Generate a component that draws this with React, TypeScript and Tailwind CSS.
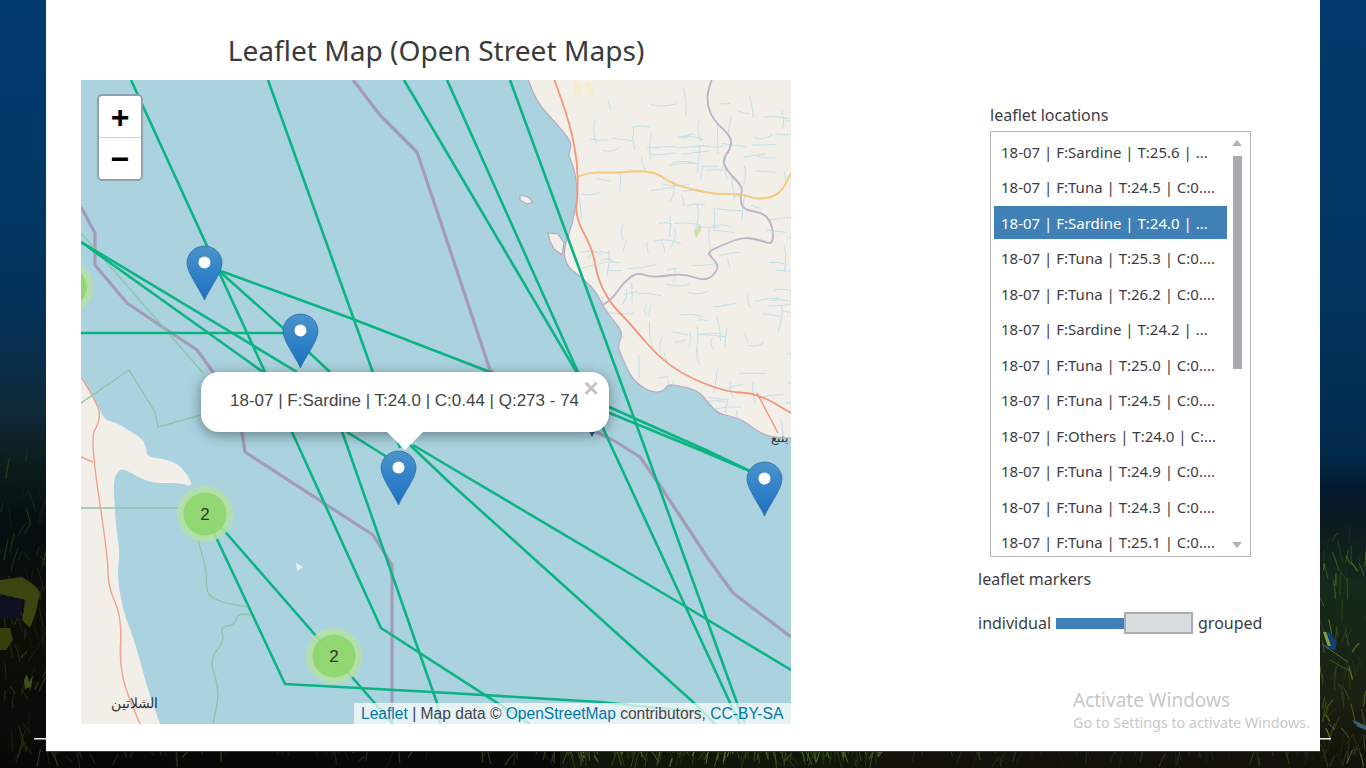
import React from "react";

const rnd = (seed: number) => {
  let s = seed;
  return () => {
    s = (s * 16807) % 2147483647;
    return (s - 1) / 2147483646;
  };
};

const GREEN = "#0db483";

const seaLines = [
  "131,80 218,270 350,318 490,372 609,407 706,450 752,472",
  "218,270 265,372 292,432 381,628 530,724",
  "218,270 283,328 330,372",
  "81,242 297,372",
  "81,242 263,372",
  "81,333 284,333",
  "268,80 400,448",
  "330,397 437,703 440,724",
  "404,80 590,395",
  "447,80 607,437 732,707 740,724",
  "510,80 642,440 737,703 745,724",
  "590,405 700,450 752,472",
  "347,432 387,457",
  "410,445 450,483 693,702 715,724",
  "413,445 450,467 688,608 791,670",
  "200,503 285,684 450,693 600,702 700,712",
  "200,503 317,637 393,724",
];

const smooth = (pts: string) => {
  const p = pts.split(" ").map((s) => s.split(",").map(Number));
  let d = `M${p[0][0]} ${p[0][1]}`;
  for (let i = 1; i < p.length - 1; i++) {
    const mx = (p[i][0] + p[i + 1][0]) / 2;
    const my = (p[i][1] + p[i + 1][1]) / 2;
    d += `Q${p[i][0]} ${p[i][1]} ${mx} ${my}`;
  }
  const l = p[p.length - 1];
  return d + `L${l[0]} ${l[1]}`;
};

const coastLine =
  "528,79 535,100 553,120 566,135 572,145 568,155 574,167 578,193 573,223 563,250 567,267 583,278 597,293 603,307 615,322 623,333 618,345 620,353 630,375 637,383 650,392 663,392 668,384 680,386 697,390 708,402 717,413 730,416 743,420 755,430 770,437 791,438";
const leftCoast =
  "81,377 100,410 105,420 117,423 128,430 140,437 146,445 147,457 160,458 177,463 188,475 193,487 180,483 167,483 153,483 140,478 130,472 120,468 113,480 115,510 116,527 120,553 117,577 123,610 133,637 140,660 147,687 160,724";
const landPath = smooth(coastLine) + "L791 79Z";
const leftLandPath = smooth(leftCoast) + "L81 724Z";

const wadis = (() => {
  const r = rnd(4242);
  const out: string[] = [];
  for (let i = 0; i < 170; i++) {
    const x = 578 + r() * 213;
    const y = 85 + r() * 335;
    const a = (r() - 0.5) * 8;
    const b = 5 + r() * 9;
    const c = (r() - 0.5) * 8;
    const vert = r() > 0.55;
    out.push(
      vert
        ? `M${x} ${y}q${a} ${b} ${c} ${b * 2}`
        : `M${x} ${y}q${b} ${a} ${b * 2} ${c}`
    );
  }
  return out;
})();

const blades = (() => {
  const r = rnd(99);
  const out: { d: string; c: string; w: number }[] = [];
  const dim = ["#1e2a10", "#19230e", "#26331a", "#141c0b", "#2e3a16"];
  const mid = ["#2c3d14", "#35491a", "#24330f", "#3e5420", "#5a7428"];
  const regions = [
    [0, 46, 460, 768, 90, 0],
    [1320, 1366, 540, 768, 80, 1],
    [0, 560, 751, 768, 60, 0],
    [560, 880, 751, 768, 170, 1],
    [880, 1366, 751, 768, 80, 0],
  ];
  regions.forEach(([a, b, c, d, n, bright]) => {
    for (let i = 0; i < n; i++) {
      const x = a + r() * (b - a);
      const y = c + r() * (d - c);
      const dx = (r() - 0.5) * 16;
      const dy = -6 - r() * 18;
      const pal = bright ? mid : dim;
      out.push({
        d: `M${x} ${y}q${dx / 3} ${dy / 2} ${dx} ${dy}`,
        c: pal[Math.floor(r() * pal.length)],
        w: 0.6 + r() * 0.9,
      });
    }
  });
  return out;
})();

function Pin({ x, y }: { x: number; y: number }) {
  return (
    <g transform={`translate(${x} ${y})`}>
      <path
        d="M0 54 C-4 44 -17.5 27 -17.5 17 C-17.5 7 -9 0 0 0 C9 0 17.5 7 17.5 17 C17.5 27 4 44 0 54Z"
        fill="url(#pinFill)"
        stroke="#2d6ea5"
        strokeWidth="0.8"
      />
      <circle cx="0" cy="16.5" r="6" fill="#ffffff" />
    </g>
  );
}

function Cluster({ x, y }: { x: number; y: number }) {
  return (
    <g>
      <circle cx={x} cy={y} r="28" fill="#b5e0a4" fillOpacity="0.85" />
      <circle cx={x} cy={y} r="21.5" fill="#8cd568" fillOpacity="0.86" />
    </g>
  );
}

function MapArt() {
  return (
    <svg viewBox="81 80 710 644" className="block w-[710px] h-[644px]">
      <defs>
        <linearGradient id="pinFill" x1="0" y1="0" x2="0" y2="1">
          <stop offset="0" stopColor="#4b93cb" />
          <stop offset="0.55" stopColor="#2f80c8" />
          <stop offset="1" stopColor="#1f6fbd" />
        </linearGradient>
        <clipPath id="landClip">
          <path d={landPath} />
        </clipPath>
      </defs>
      <rect x="81" y="80" width="710" height="644" fill="#aad3df" />
      <path d={landPath} fill="#f2efe9" />
      <path d={smooth(coastLine)} fill="none" stroke="#b7abc2" strokeWidth="1.2" />
      <path d={leftLandPath} fill="#f2efe9" />
      <path d="M520 195l8 2 5 5-6 2-7-4z M548 233l10 1 6 9-2 12-8-6-4-8z" fill="#f2efe9" stroke="#b7abc2" strokeWidth="1.2" />
      <path d="M296 563l7 4-6 4z" fill="#f2efe9" />
      <g clipPath="url(#landClip)" fill="none" stroke="#c2dfe8" strokeWidth="1">
        {wadis.map((d, i) => (
          <path key={i} d={d} />
        ))}
      </g>
      <path d="M694 232l6-8 1 6-5 8z" fill="#cfe0a6" />
      <path d="M573 82l7 0 2 14-7 0z M584 82l7 0 4 14-6 0z" fill="#f5edd2" />
      {/* land boundary */}
      <path
        d={smooth(
          "712,79 708,90 707,103 713,120 732,137 730,150 722,160 728,172 743,187 740,198 743,210 765,213 773,227 773,245 760,240 743,237 725,244 707,252 712,258 720,267 707,282 683,273 653,278 637,272 623,283 613,298 603,305"
        )}
        fill="none"
        stroke="#bdb2c9"
        strokeWidth="1.8"
      />
      {/* roads */}
      <g fill="none" strokeLinejoin="round">
        <path
          d={smooth("577,177 590,172 613,173 653,170 673,185 717,195 740,193 757,200 780,195 791,173")}
          stroke="#f7c97f"
          strokeWidth="1.8"
        />
        <path
          d={smooth("554,79 567,113 577,157 578,193 575,217 593,250 597,277 610,303 627,320 667,367 723,392 757,393 791,413")}
          stroke="#f4967a"
          strokeWidth="1.8"
        />
        <polyline points="757,393 778,433" stroke="#f4967a" strokeWidth="1.4" />
        <path
          d={smooth("81,377 100,407 99,423 90,438 108,557 108,587 122,617 119,673 140,724")}
          stroke="#f4a08a"
          strokeWidth="1.4"
        />
        <polyline points="81,457 93,462" stroke="#f4a08a" strokeWidth="1.4" />
      </g>
      {/* sea boundary */}
      <g fill="none" stroke="#a59ab8" strokeWidth="3.2" strokeLinejoin="round">
        <polyline points="353,80 380,115 417,152 440,220 490,370 530,400 613,440 640,457 663,490 707,557 733,593 791,637" />
        <polyline points="81,207 95,233 95,265 127,303 167,330 197,350 213,372 240,420 245,452 373,535 392,565 392,724" />
      </g>
      {/* green thin boundaries */}
      <g fill="none" stroke="#8cc5a8" strokeWidth="1.3">
        <polyline points="81,403 129,370 155,412 158,427 205,414" />
        <polyline points="81,233 150,312 203,373" />
        <polyline points="81,508 182,508" />
        <path d={smooth("198,540 207,570 206,590 212,598 225,603 247,607")} />
        <path d={smooth("250,615 238,612 235,625 220,627 225,640 209,660 220,690 213,724")} />
      </g>
      {/* routes */}
      <g fill="none" stroke={GREEN} strokeWidth="2.6" strokeLinejoin="round">
        {seaLines.map((p, i) => (
          <polyline key={i} points={p} />
        ))}
      </g>
      <Cluster x={65} y={287} />
      <Cluster x={205} y={514} />
      <Cluster x={334} y={656} />
      <Pin x={204.5} y={246} />
      <Pin x={300.5} y={314} />
      <Pin x={398.5} y={451} />
      <Pin x={764.5} y={462} />
      <path d="M587 428h10l-5 9z" fill="#245f9f" />
    </svg>
  );
}

const rows = [
  ["18-07 | F:Sardine | T:25.6 | ...", false],
  ["18-07 | F:Tuna | T:24.5 | C:0....", false],
  ["18-07 | F:Sardine | T:24.0 | ...", true],
  ["18-07 | F:Tuna | T:25.3 | C:0....", false],
  ["18-07 | F:Tuna | T:26.2 | C:0....", false],
  ["18-07 | F:Sardine | T:24.2 | ...", false],
  ["18-07 | F:Tuna | T:25.0 | C:0....", false],
  ["18-07 | F:Tuna | T:24.5 | C:0....", false],
  ["18-07 | F:Others | T:24.0 | C:...", false],
  ["18-07 | F:Tuna | T:24.9 | C:0....", false],
  ["18-07 | F:Tuna | T:24.3 | C:0....", false],
  ["18-07 | F:Tuna | T:25.1 | C:0....", false],
] as const;

const UI = "font-['Noto_Sans','Open_Sans',sans-serif]";
const HV = "font-['Liberation_Sans',Arial,sans-serif]";

export default function App() {
  return (
    <div className="relative w-[1366px] h-[768px] overflow-hidden bg-black">
      <svg className="absolute inset-0 w-[1366px] h-[768px]" viewBox="0 0 1366 768">
        <defs>
          <linearGradient id="bgL" x1="0" y1="0" x2="0" y2="1">
            <stop offset="0" stopColor="#013a6c" />
            <stop offset="0.2" stopColor="#013a69" />
            <stop offset="0.4" stopColor="#03325a" />
            <stop offset="0.53" stopColor="#0f2a3a" />
            <stop offset="0.61" stopColor="#0b1b1a" />
            <stop offset="0.68" stopColor="#050e12" />
            <stop offset="0.8" stopColor="#0c0f08" />
            <stop offset="1" stopColor="#0a0906" />
          </linearGradient>
          <linearGradient id="bgR" x1="0" y1="0" x2="0" y2="1">
            <stop offset="0" stopColor="#013a6c" />
            <stop offset="0.4" stopColor="#02345e" />
            <stop offset="0.59" stopColor="#01294a" />
            <stop offset="0.64" stopColor="#04192c" />
            <stop offset="0.69" stopColor="#0d1c1e" />
            <stop offset="0.76" stopColor="#142a1a" />
            <stop offset="0.91" stopColor="#1a2012" />
            <stop offset="1" stopColor="#120f08" />
          </linearGradient>
        </defs>
        <rect x="0" y="0" width="46" height="768" fill="url(#bgL)" />
        <rect x="1320" y="0" width="46" height="768" fill="url(#bgR)" />
        <rect x="0" y="751" width="1366" height="17" fill="#070806" />
        <rect x="560" y="751" width="320" height="17" fill="#10170a" />
        <rect x="880" y="751" width="486" height="17" fill="#12120a" />
        {blades.map((b, i) => (
          <path key={i} d={b.d} stroke={b.c} strokeWidth={b.w} fill="none" />
        ))}
        <path d="M0 580 L22 577 L34 585 L40 592 L36 612 L30 628 L22 620 L26 600 L0 594Z" fill="#3a450f" />
        <path d="M0 628 L10 628 L13 640 L6 650 L0 650Z" fill="#323f0b" />
        <path d="M0 596 L24 600 L20 618 L0 618Z" fill="#0e1122" />
        <path d="M24 680 l3 -6 2 8 4 -7 -2 12 -6 2z" fill="#3f4f1c" />
        <path d="M1323 632 l6 0 8 10 -2 8 -8 -2z" fill="#123f78" />
        <path d="M1323 632 l3 0 5 14 -3 0z" fill="#8aa52a" />
        <path d="M1352 720 l6 2 8 4 0 4 -8 -3z" fill="#3d5e74" />
        <path d="M1322 644 q14 10 26 18" stroke="#5f6a45" strokeWidth="1" fill="none" />
        <path d="M1330 660 q10 6 22 12" stroke="#3e4a1c" strokeWidth="1.2" fill="none" />
        <rect x="34" y="738" width="12" height="1.5" fill="#f2f2f2" />
        <rect x="1320" y="738" width="11" height="1.5" fill="#f2f2f2" />
      </svg>

      <div className="relative ml-[46px] w-[1274px] h-[751px] bg-white flex text-[#404048] border-b border-[#3a3a3a] box-content -mb-px">
        {/* left column */}
        <div className="w-[745px] pl-[35px] shrink-0">
          <h1 className={`${UI} h-[80px] w-[710px] pt-[31px] text-center text-[28.1px] leading-[38px] font-normal text-[#3a3a3a] whitespace-nowrap`}>
            Leaflet Map (Open Street Maps)
          </h1>
          <div className="relative w-[710px] h-[644px] overflow-hidden">
            <MapArt />

            {/* zoom control */}
            <div className="absolute left-[16px] top-[14px] w-[46px] h-[87px] rounded-[5px] border-[2.5px] border-[#8ba3ad] bg-white flex flex-col text-black">
              <div className={`${HV} flex-1 flex items-center justify-center text-[32px] leading-none font-bold border-b border-[#cfcfcf]`}>+</div>
              <div className={`${HV} flex-1 flex items-center justify-center text-[32px] leading-none font-bold`}>−</div>
            </div>

            {/* cluster labels */}
            <span className={`${HV} absolute left-[118px] top-[425px] w-[12px] text-center text-[17px] leading-5 text-[#333]`}>2</span>
            <span className={`${HV} absolute left-[247px] top-[567px] w-[12px] text-center text-[17px] leading-5 text-[#333]`}>2</span>

            {/* place labels */}
            <span className={`${HV} absolute left-[30px] top-[615px] text-[14px] leading-4 text-[#333]`} dir="rtl">الشلاتين</span>
            <span className={`${HV} absolute left-[690px] top-[350px] text-[12px] leading-4 text-[#333]`} dir="rtl">ينبع</span>

            {/* popup */}
            <div className="absolute left-[120px] top-[292px] w-[408px] h-[60px] rounded-[18px] bg-white shadow-[0_3px_14px_rgba(0,0,0,0.4)]">
              <div className={`${HV} pl-[29px] pt-[19px] text-[17px] leading-5 whitespace-nowrap text-[#444]`}>
                18-07 | F:Sardine | T:24.0 | C:0.44 | Q:273 - 74
              </div>
              <span className={`${HV} absolute left-[380px] top-[3px] w-[20px] text-center text-[26px] leading-[26px] font-bold text-[#c3c3c3]`}>×</span>
              <div className="absolute left-[186px] top-[60px] w-0 h-0 border-l-[18px] border-r-[18px] border-t-[18px] border-l-transparent border-r-transparent border-t-white" />
            </div>

            {/* attribution */}
            <div className={`${HV} absolute right-0 bottom-0 h-[21px] w-[437px] pl-[7px] bg-white/70 text-[15.6px] leading-[21px] whitespace-nowrap text-[#444]`}>
              <span className="text-[#0078a8]">Leaflet</span> | Map data © <span className="text-[#0078a8]">OpenStreetMap</span> contributors, <span className="text-[#0078a8]">CC-BY-SA</span>
            </div>
          </div>
        </div>

        {/* right column */}
        <div className={`${UI} relative flex-1 pl-[187px] text-[16px] text-[#3c3c44]`}>
          <div className="ml-[12px] pt-[104px] h-[131px] leading-[22px]">leaflet locations</div>
          <div className="ml-[12px] w-[261px] h-[426px] border-[1.5px] border-[#b4b8bb] flex overflow-hidden text-[15px]">
            <div className="w-[236px] pl-[3px] pt-[2px] shrink-0">
              {rows.map(([t, sel], i) => (
                <div
                  key={i}
                  className={`h-[35.5px] pl-[7px] flex items-center whitespace-nowrap ${
                    sel ? "bg-[linear-gradient(#3f81b7,#3f81b7)] bg-no-repeat bg-[length:100%_33px] bg-[position:0_1px] text-white" : ""
                  }`}
                >
                  {t}
                </div>
              ))}
            </div>
            <div className="flex-1 flex flex-col items-center pt-[8px] pr-[3px]">
              <div className="w-0 h-0 border-l-[5px] border-r-[5px] border-b-[6px] border-l-transparent border-r-transparent border-b-[#b0b3b6]" />
              <div className="w-[9px] h-[213px] mt-[10px] bg-[#a8aaad]" />
              <div className="mt-[173px] w-0 h-0 border-l-[5px] border-r-[5px] border-t-[6px] border-l-transparent border-r-transparent border-t-[#b0b3b6]" />
            </div>
          </div>
          <div className="mt-[11px] leading-[22px]">leaflet markers</div>
          <div className="mt-[22px] flex items-center h-[22px]">
            <span className="w-[78px]">individual</span>
            <div className="w-[68px] h-[11px] bg-[#3f81b7]" />
            <div className="w-[69px] h-[22px] bg-[#d8dde0] border-2 border-[#a9adb0]" />
            <span className="ml-[5px]">grouped</span>
          </div>
          <div className="absolute left-[282px] top-[687px] text-[#c8c8c8] whitespace-nowrap">
            <div className="text-[19px] leading-[26px]">Activate Windows</div>
            <div className="text-[14.3px] leading-[20px]">Go to Settings to activate Windows.</div>
          </div>
        </div>
      </div>
    </div>
  );
}
